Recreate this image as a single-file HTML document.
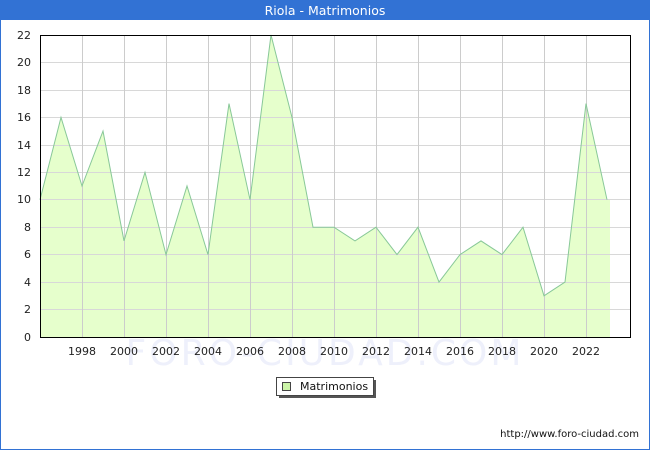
<!DOCTYPE html>
<html><head><style>
body{margin:0;width:650px;height:450px;overflow:hidden;background:#fff;font-family:"DejaVu Sans","Liberation Sans",sans-serif}
</style></head><body>
<svg width="650" height="450" xmlns="http://www.w3.org/2000/svg" font-family="DejaVu Sans, Liberation Sans, sans-serif">
<rect x="0" y="0" width="650" height="450" fill="#fff"/>
<rect x="0.5" y="0.5" width="649" height="449" fill="none" stroke="#3272d4" stroke-width="1"/>
<rect x="0" y="0" width="650" height="20" fill="#3272d4"/>
<text x="325" y="15" font-size="12.5" fill="#fff" text-anchor="middle">Riola - Matrimonios</text>
<text x="325" y="365" font-size="36" fill="#eef0fb" text-anchor="middle" letter-spacing="3">FORO-CIUDAD.COM</text>
<polygon fill="#e6ffcc" points="40,337 40,199.7 61,117.4 82,186 103,131.1 124,240.9 145,172.3 166,254.6 187,186 208,254.6 229,103.6 250,199.7 271,35 292,117.4 313,227.2 334,227.2 355,240.9 376,227.2 397,254.6 418,227.2 439,282.1 460,254.6 481,240.9 502,254.6 523,227.2 544,295.8 565,282.1 586,103.6 607,199.7 610,199.7 610,337"/>
<g stroke="#d8d8d8" stroke-width="1">
<line x1="40" x2="630" y1="309.5" y2="309.5"/><line x1="40" x2="630" y1="282.5" y2="282.5"/><line x1="40" x2="630" y1="254.5" y2="254.5"/><line x1="40" x2="630" y1="227.5" y2="227.5"/><line x1="40" x2="630" y1="199.5" y2="199.5"/><line x1="40" x2="630" y1="172.5" y2="172.5"/><line x1="40" x2="630" y1="145.5" y2="145.5"/><line x1="40" x2="630" y1="117.5" y2="117.5"/><line x1="40" x2="630" y1="90.5" y2="90.5"/><line x1="40" x2="630" y1="62.5" y2="62.5"/>
</g>
<g stroke="#cccccc" stroke-width="1">
<line x1="82.5" x2="82.5" y1="35" y2="337"/><line x1="124.5" x2="124.5" y1="35" y2="337"/><line x1="166.5" x2="166.5" y1="35" y2="337"/><line x1="208.5" x2="208.5" y1="35" y2="337"/><line x1="250.5" x2="250.5" y1="35" y2="337"/><line x1="292.5" x2="292.5" y1="35" y2="337"/><line x1="334.5" x2="334.5" y1="35" y2="337"/><line x1="376.5" x2="376.5" y1="35" y2="337"/><line x1="418.5" x2="418.5" y1="35" y2="337"/><line x1="460.5" x2="460.5" y1="35" y2="337"/><line x1="502.5" x2="502.5" y1="35" y2="337"/><line x1="544.5" x2="544.5" y1="35" y2="337"/><line x1="586.5" x2="586.5" y1="35" y2="337"/>
</g>
<polyline fill="none" stroke="#88c898" stroke-width="1" points="40,199.7 61,117.4 82,186 103,131.1 124,240.9 145,172.3 166,254.6 187,186 208,254.6 229,103.6 250,199.7 271,35 292,117.4 313,227.2 334,227.2 355,240.9 376,227.2 397,254.6 418,227.2 439,282.1 460,254.6 481,240.9 502,254.6 523,227.2 544,295.8 565,282.1 586,103.6 607,199.7"/>
<rect x="40.5" y="35.5" width="590" height="302" fill="none" stroke="#000" stroke-width="1"/>
<g font-size="11" fill="#222" text-anchor="end">
<text x="31" y="341">0</text><text x="31" y="313">2</text><text x="31" y="286">4</text><text x="31" y="258">6</text><text x="31" y="231">8</text><text x="31" y="203">10</text><text x="31" y="176">12</text><text x="31" y="149">14</text><text x="31" y="121">16</text><text x="31" y="94">18</text><text x="31" y="66">20</text><text x="31" y="39">22</text>
</g>
<g font-size="11" fill="#222" text-anchor="middle">
<text x="82" y="355">1998</text><text x="124" y="355">2000</text><text x="166" y="355">2002</text><text x="208" y="355">2004</text><text x="250" y="355">2006</text><text x="292" y="355">2008</text><text x="334" y="355">2010</text><text x="376" y="355">2012</text><text x="418" y="355">2014</text><text x="460" y="355">2016</text><text x="502" y="355">2018</text><text x="544" y="355">2020</text><text x="586" y="355">2022</text>
</g>
<rect x="279" y="380" width="97" height="18" fill="#555"/>
<rect x="276.5" y="377.5" width="97" height="18" fill="#fff" stroke="#444"/>
<rect x="282.5" y="382.5" width="8" height="8" fill="#ccf5a8" stroke="#444"/>
<text x="300" y="390" font-size="11" fill="#111">Matrimonios</text>
<text x="639" y="437" font-size="10" fill="#111" text-anchor="end">http://www.foro-ciudad.com</text>
</svg>
</body></html>
